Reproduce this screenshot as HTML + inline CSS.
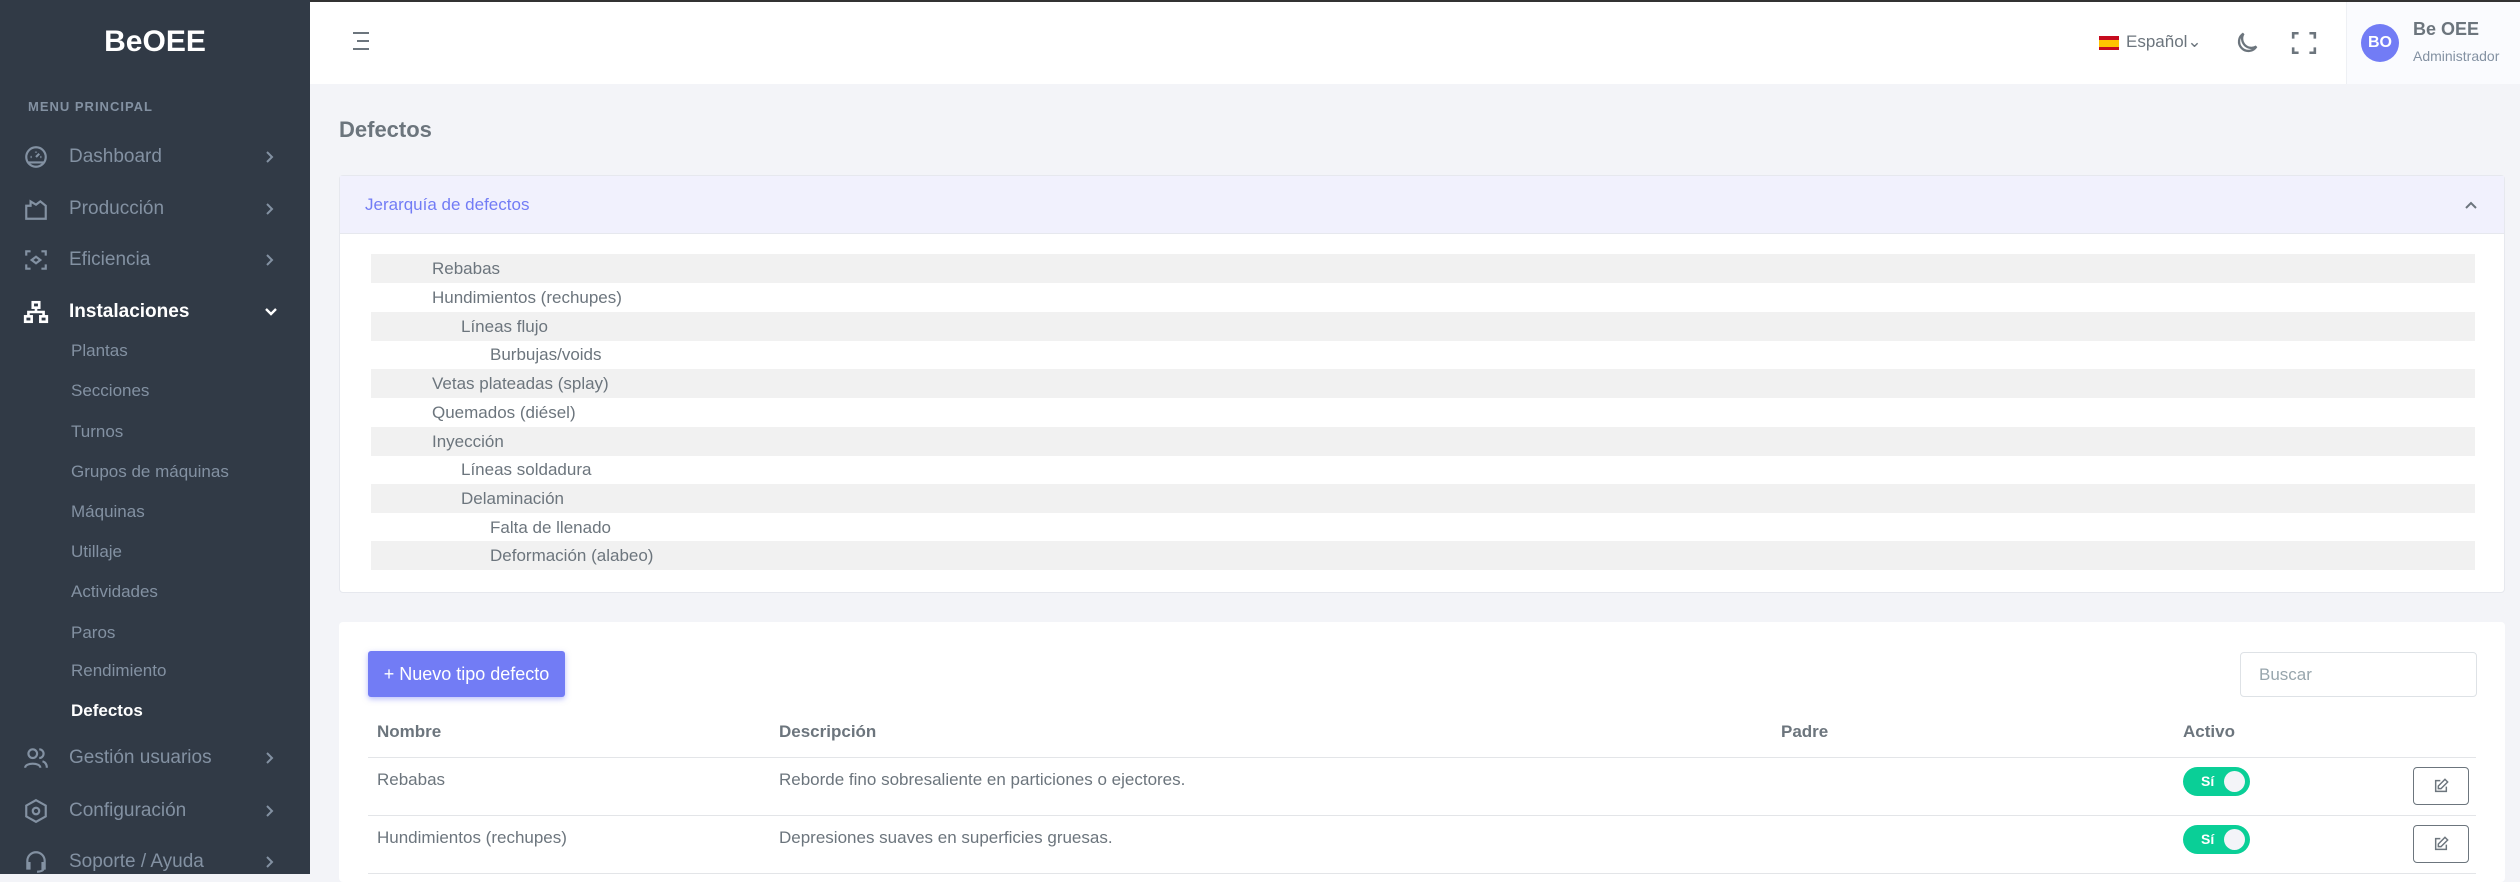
<!DOCTYPE html>
<html><head><meta charset="utf-8"><style>
*{box-sizing:border-box;margin:0;padding:0}
body{width:2520px;height:874px;overflow:hidden;background:#f3f4f8;font-family:"Liberation Sans",sans-serif;color:#6c757d;position:relative}
.sb{position:absolute;left:0;top:0;width:310px;height:874px;background:#313a46}
.logo{position:absolute;left:0;width:310px;top:25px;text-align:center;color:#fff;font-weight:bold;font-size:30px;letter-spacing:0}
.mp{position:absolute;left:28px;top:99px;font-size:13px;font-weight:bold;letter-spacing:1px;color:#8391a2}
.it{position:absolute;left:69px;font-size:19px;color:#8391a2;transform:translateY(-50%)}
.sub{position:absolute;left:71px;font-size:17px;color:#8391a2;transform:translateY(-50%)}
.chev{position:absolute;left:264px;transform:translateY(-50%)}
.ic{position:absolute;left:23px;transform:translateY(-50%)}
.top{position:absolute;left:310px;top:0;width:2210px;height:84px;background:#fff;border-top:2px solid #333}
.user{position:absolute;left:2346px;top:2px;width:174px;height:82px;background:#fafbfe;border-left:1px solid #eef0f4}
.card{position:absolute;left:339px;width:2166px;background:#fff;border-radius:4px}
.row{position:absolute;left:371px;width:2104px;height:29px;font-size:17px;color:#6c757d;line-height:29px}
.g{background:#f1f1f1}
.th{position:absolute;top:722px;font-size:17px;font-weight:bold;color:#6c757d}
.td{position:absolute;font-size:17px;color:#6c757d}
.hl{position:absolute;left:368px;width:2108px;height:1px;background:#e3e5e8}
.tg{position:absolute;left:2183px;width:67px;height:29px;border-radius:15px;background:#0acf97;color:#fff;font-size:14px;font-weight:bold;line-height:29px;padding-left:18px}
.tg:after{content:"";position:absolute;right:5px;top:4px;width:21px;height:21px;border-radius:50%;background:#f3f4f8}
.eb{position:absolute;left:2413px;width:56px;height:38px;border:1px solid #6c757d;border-radius:4px;display:flex;align-items:center;justify-content:center}
</style></head><body>
<div class="sb">
<div class="logo">BeOEE</div>
<div class="mp">MENU PRINCIPAL</div>
<svg class="ic" style="top:157px" width="26" height="26" viewBox="0 0 24 24" fill="none" stroke="#8391a2" stroke-width="2"><circle cx="12" cy="12" r="9"/><path d="M12 12l3-3M7 12h1M16 12h1M12 7v1M5 17h14"/></svg>
<div class="it" style="top:157px">Dashboard</div><svg class="chev" style="top:157px" width="12" height="14" viewBox="0 0 12 14" fill="none" stroke="#8391a2" stroke-width="2"><path d="M3 2l5 5-5 5"/></svg>
<svg class="ic" style="top:209px" width="26" height="26" viewBox="0 0 24 24" fill="none" stroke="#8391a2" stroke-width="2"><path d="M3 21V9l4 0V5l5 3 4-3 5 4v12z"/></svg>
<div class="it" style="top:209px">Producción</div><svg class="chev" style="top:209px" width="12" height="14" viewBox="0 0 12 14" fill="none" stroke="#8391a2" stroke-width="2"><path d="M3 2l5 5-5 5"/></svg>
<svg class="ic" style="top:260px" width="26" height="26" viewBox="0 0 24 24" fill="none" stroke="#8391a2" stroke-width="2"><path d="M3 8V4h4M17 4h4v4M21 16v4h-4M7 20H3v-4"/><path d="M8 12l4-3 4 3-4 3z"/></svg>
<div class="it" style="top:260px">Eficiencia</div><svg class="chev" style="top:260px" width="12" height="14" viewBox="0 0 12 14" fill="none" stroke="#8391a2" stroke-width="2"><path d="M3 2l5 5-5 5"/></svg>
<svg class="ic" style="top:312px" width="26" height="24" viewBox="0 0 24 22" fill="none" stroke="#fff" stroke-width="2.4"><rect x="9" y="2" width="6" height="5"/><rect x="2" y="15" width="6" height="5"/><rect x="16" y="15" width="6" height="5"/><path d="M12 7v4M5 15v-4h14v4"/></svg>
<div class="it" style="top:312px;color:#fff;font-weight:bold">Instalaciones</div><svg class="chev" style="top:312px" width="14" height="12" viewBox="0 0 14 12" fill="none" stroke="#fff" stroke-width="2.4"><path d="M2 3l5 5 5-5"/></svg>
<div class="sub" style="top:351px">Plantas</div>
<div class="sub" style="top:391px">Secciones</div>
<div class="sub" style="top:432px">Turnos</div>
<div class="sub" style="top:472px">Grupos de máquinas</div>
<div class="sub" style="top:512px">Máquinas</div>
<div class="sub" style="top:552px">Utillaje</div>
<div class="sub" style="top:592px">Actividades</div>
<div class="sub" style="top:633px">Paros</div>
<div class="sub" style="top:671px">Rendimiento</div>
<div class="sub" style="top:711px;color:#fff;font-weight:bold">Defectos</div>
<svg class="ic" style="top:758px" width="26" height="24" viewBox="0 0 24 22" fill="none" stroke="#8391a2" stroke-width="2"><circle cx="9" cy="7" r="4"/><path d="M2 20c0-5 14-5 14 0M15 3a4 4 0 010 8M18 14c3 1 4 3 4 6"/></svg>
<div class="it" style="top:758px">Gestión usuarios</div><svg class="chev" style="top:758px" width="12" height="14" viewBox="0 0 12 14" fill="none" stroke="#8391a2" stroke-width="2"><path d="M3 2l5 5-5 5"/></svg>
<svg class="ic" style="top:811px" width="26" height="26" viewBox="0 0 24 24" fill="none" stroke="#8391a2" stroke-width="2"><path d="M12 2l9 5v10l-9 5-9-5V7z"/><circle cx="12" cy="12" r="3"/></svg>
<div class="it" style="top:811px">Configuración</div><svg class="chev" style="top:811px" width="12" height="14" viewBox="0 0 12 14" fill="none" stroke="#8391a2" stroke-width="2"><path d="M3 2l5 5-5 5"/></svg>
<svg class="ic" style="top:862px" width="26" height="26" viewBox="0 0 24 24" fill="none" stroke="#8391a2" stroke-width="2"><path d="M4 14v-3a8 8 0 0116 0v3M4 13h2v5H4zM18 13h2v5h-2zM19 18c0 2-3 3-6 3"/></svg>
<div class="it" style="top:862px">Soporte / Ayuda</div><svg class="chev" style="top:862px" width="12" height="14" viewBox="0 0 12 14" fill="none" stroke="#8391a2" stroke-width="2"><path d="M3 2l5 5-5 5"/></svg>
</div>
<div class="top">
<svg style="position:absolute;left:40px;top:27px" width="22" height="24" viewBox="0 0 22 24" stroke="#6c757d" stroke-width="2"><path d="M3 4h16M7 12h12M3 20h16"/></svg>
<div style="position:absolute;left:1789px;top:34px;width:20px;height:14px;background:#c60b1e"><div style="margin-top:3.5px;height:7px;background:#ffc400"></div></div>
<div style="position:absolute;left:1816px;top:30px;font-size:17px;color:#6c757d">Español&#8964;</div>
<svg style="position:absolute;left:1233px;top:0" width="0" height="0"></svg>
<svg style="position:absolute;left:1923px;top:27px" width="28" height="28" viewBox="0 0 24 24" fill="none" stroke="#6c757d" stroke-width="2"><path d="M20 15A8 8 0 019 4a8 8 0 1011 11z"/></svg>
<svg style="position:absolute;left:1981px;top:29px" width="26" height="24" viewBox="0 0 24 22" fill="none" stroke="#6c757d" stroke-width="2.4"><path d="M2 7V2h5M17 2h5v5M22 15v5h-5M7 20H2v-5"/></svg>
</div>
<div class="user">
<div style="position:absolute;left:14px;top:22px;width:38px;height:38px;border-radius:50%;background:#727cf5;color:#fff;font-weight:bold;font-size:16px;line-height:38px;text-align:center">BO</div>
<div style="position:absolute;left:66px;top:17px;font-size:18px;font-weight:bold;color:#6c757d">Be OEE</div>
<div style="position:absolute;left:66px;top:46px;font-size:14px;color:#8391a2">Administrador</div>
</div>
<div style="position:absolute;left:339px;top:117px;font-size:22px;font-weight:bold;color:#6c757d">Defectos</div>
<div class="card" style="top:175px;height:418px;border:1px solid #e6e8ee">
<div style="height:58px;background:#f1f1fd;border-bottom:1px solid #e6e8ee;position:relative">
<div style="position:absolute;left:25px;top:19px;font-size:17px;color:#727cf5">Jerarquía de defectos</div>
<svg style="position:absolute;right:26px;top:23px" width="14" height="12" viewBox="0 0 14 12" fill="none" stroke="#6c757d" stroke-width="2"><path d="M2 9l5-5 5 5"/></svg>
</div></div>
<div class="row g" style="top:254px;padding-left:61px">Rebabas</div>
<div class="row" style="top:283px;padding-left:61px">Hundimientos (rechupes)</div>
<div class="row g" style="top:312px;padding-left:90px">Líneas flujo</div>
<div class="row" style="top:340px;padding-left:119px">Burbujas/voids</div>
<div class="row g" style="top:369px;padding-left:61px">Vetas plateadas (splay)</div>
<div class="row" style="top:398px;padding-left:61px">Quemados (diésel)</div>
<div class="row g" style="top:427px;padding-left:61px">Inyección</div>
<div class="row" style="top:455px;padding-left:90px">Líneas soldadura</div>
<div class="row g" style="top:484px;padding-left:90px">Delaminación</div>
<div class="row" style="top:513px;padding-left:119px">Falta de llenado</div>
<div class="row g" style="top:541px;padding-left:119px">Deformación (alabeo)</div>
<div class="card" style="top:622px;height:260px"></div>
<div style="position:absolute;left:368px;top:651px;width:197px;height:46px;background:#727cf5;border-radius:3px;box-shadow:0 2px 6px rgba(114,124,245,.5);color:#fff;font-size:18px;line-height:46px;text-align:center">+ Nuevo tipo defecto</div>
<div style="position:absolute;left:2240px;top:652px;width:237px;height:45px;border:1px solid #dee2e6;border-radius:4px;font-size:17px;color:#98a6ad;line-height:43px;padding-left:18px">Buscar</div>
<div class="th" style="left:377px">Nombre</div>
<div class="th" style="left:779px">Descripción</div>
<div class="th" style="left:1781px">Padre</div>
<div class="th" style="left:2183px">Activo</div>
<div class="hl" style="top:757px"></div>
<div class="td" style="left:377px;top:770px">Rebabas</div>
<div class="td" style="left:779px;top:770px">Reborde fino sobresaliente en particiones o ejectores.</div>
<div class="tg" style="top:767px">Sí</div>
<div class="eb" style="top:767px"><svg width="16" height="16" viewBox="0 0 24 24" fill="none" stroke="#6c757d" stroke-width="2.2"><path d="M11 4H4v16h16v-7"/><path d="M18 2l4 4-10 10H8v-4z"/></svg></div>
<div class="hl" style="top:815px"></div>
<div class="td" style="left:377px;top:828px">Hundimientos (rechupes)</div>
<div class="td" style="left:779px;top:828px">Depresiones suaves en superficies gruesas.</div>
<div class="tg" style="top:825px">Sí</div>
<div class="eb" style="top:825px"><svg width="16" height="16" viewBox="0 0 24 24" fill="none" stroke="#6c757d" stroke-width="2.2"><path d="M11 4H4v16h16v-7"/><path d="M18 2l4 4-10 10H8v-4z"/></svg></div>
<div class="hl" style="top:873px"></div>
</body></html>
